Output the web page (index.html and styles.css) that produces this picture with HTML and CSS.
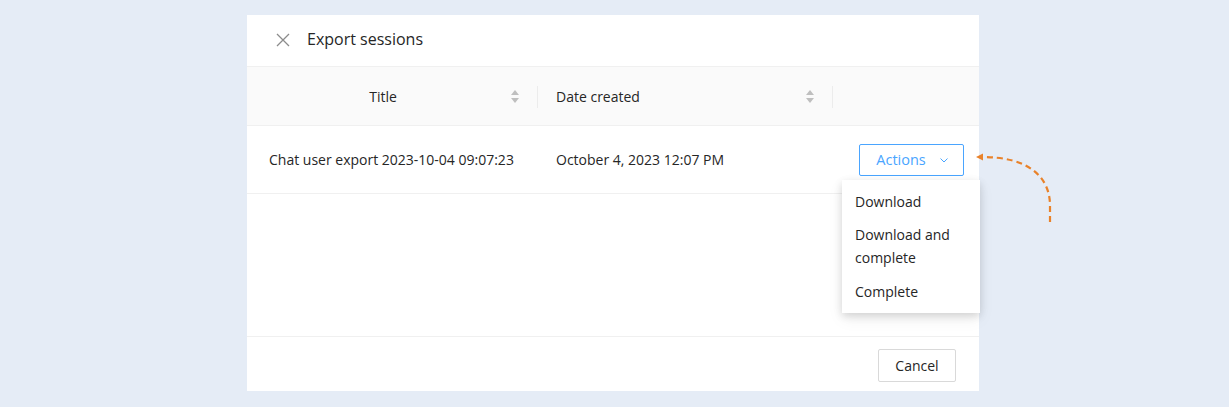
FILE: index.html
```html
<!DOCTYPE html>
<html lang="en">
<head>
  <meta charset="UTF-8">
  <title>Export sessions</title>
  <link rel="stylesheet" href="styles.css">
</head>
<body>
  <div class="modal">
    <div class="modal-header">
      <span class="close">
        <svg width="14" height="14" viewBox="0 0 14 14"><path d="M1 1L13 13M13 1L1 13" stroke="#8c8c8c" stroke-width="1.3" fill="none"/></svg>
      </span>
      <span class="modal-title">Export sessions</span>
    </div>

    <div class="table">
      <div class="thead">
        <div class="th th-title">
          <span class="th-label">Title</span>
          <span class="sorter"></span>
        </div>
        <div class="th th-date">
          <span class="th-label">Date created</span>
          <span class="sorter"></span>
        </div>
        <div class="th th-actions"></div>
      </div>
      <div class="tr">
        <div class="td td-title">Chat user export 2023-10-04 09:07:23</div>
        <div class="td td-date">October 4, 2023 12:07 PM</div>
        <div class="td td-actions">
          <div class="actions">
            <button class="btn-actions">Actions
              <svg width="10" height="10" viewBox="0 0 10 10"><path d="M1.5 3.5L5 7L8.5 3.5" stroke="#4aa5ff" stroke-width="1" fill="none"/></svg>
            </button>
            <ul class="menu">
              <li>Download</li>
              <li>Download and complete</li>
              <li>Complete</li>
            </ul>
          </div>
        </div>
      </div>
    </div>

    <div class="modal-footer">
      <button class="btn-cancel">Cancel</button>
    </div>
  </div>

  <!-- arrow pointing at the actions button -->
  <svg class="hint" width="90" height="90" viewBox="0 0 90 90">
    <path d="M80 78 L80 60 C79 32 58 13 12 13" stroke="#e9822a" stroke-width="2.2" stroke-dasharray="6 4" fill="none"/>
    <path d="M6 13 L13 9.5 L13 16.5 Z" fill="#e9822a"/>
  </svg>
</body>
</html>
```
FILE: styles.css
```css
body {
  margin: 0;
  background-color: #e5ecf6;
  font-family: "Open Sans", "Noto Sans", sans-serif;
  font-size: 14px;
  color: #262626;
  height: 407px;
  overflow: hidden;
  position: relative;
}

.modal {
  margin: 15px 0 0 247px;
  width: 732px;
  height: 376px;
  background-color: #fff;
  display: flex;
  flex-direction: column;
}

.modal-header {
  height: 51px;
  border-bottom: 1px solid #f0f0f0;
  display: flex;
  align-items: center;
  padding: 0 0 0 29px;
}

.close {
  display: flex;
  margin-right: 17px;
  margin-top: -2px;
}

.modal-title {
  font-size: 16px;
  color: #262626;
  margin-top: -4px;
}

.table {
  flex: 1;
}

.thead {
  display: flex;
  height: 57px;
  padding-top: 1px;
  background-color: #fafafa;
  border-bottom: 1px solid #f0f0f0;
}

.th {
  position: relative;
  display: flex;
  align-items: center;
  color: #262626;
}

.th::after {
  content: "";
  position: absolute;
  right: 0;
  top: 50%;
  width: 1px;
  height: 22px;
  margin-top: -11px;
  background-color: #ececec;
}

.th-title {
  width: 291px;
  padding-right: 19px;
  box-sizing: border-box;
}

.th-title .th-label {
  flex: 1;
  text-align: center;
  padding-left: 8px;
}

.th-date {
  width: 295px;
  padding: 0 19px 0 18px;
  box-sizing: border-box;
}

.th-date .th-label {
  flex: 1;
}

.th-actions {
  flex: 1;
}

.th-actions::after {
  display: none;
}

.sorter {
  width: 8px;
  height: 13px;
  position: relative;
}

.sorter::before,
.sorter::after {
  content: "";
  position: absolute;
  left: 0;
  border-left: 4px solid transparent;
  border-right: 4px solid transparent;
}

.sorter::before {
  top: 0;
  border-bottom: 5px solid #bfbfbf;
}

.sorter::after {
  bottom: 0;
  border-top: 5px solid #bfbfbf;
}

.tr {
  display: flex;
  height: 67px;
  border-bottom: 1px solid #f0f0f0;
}

.td {
  display: flex;
  align-items: center;
}

.td-title {
  width: 291px;
  padding-left: 22px;
  box-sizing: border-box;
}

.td-date {
  width: 295px;
  padding-left: 18px;
  box-sizing: border-box;
}

.td-actions {
  flex: 1;
  justify-content: flex-end;
  padding-right: 15px;
}

.actions {
  position: relative;
}

.btn-actions {
  height: 32px;
  width: 105px;
  border: 1px solid #4aa5ff;
  border-radius: 2px;
  background: #fff;
  color: #4aa5ff;
  font-family: inherit;
  font-size: 14.5px;
  padding: 0 0 0 2px;
  display: flex;
  align-items: center;
  justify-content: center;
  gap: 13px;
}

.btn-actions svg {
  margin-top: 1px;
}

.menu {
  position: absolute;
  top: 36px;
  right: -16px;
  width: 138px;
  margin: 0;
  padding: 5px 0 5px;
  list-style: none;
  background: #fff;
  box-shadow: 0 3px 8px rgba(0, 0, 0, 0.14), 0 6px 16px rgba(0, 0, 0, 0.06);
  z-index: 2;
}

.menu li {
  padding: 5px 13px 5px 13px;
  line-height: 23px;
  color: #262626;
}

.menu li:last-child {
  padding-top: 6px;
}

.modal-footer {
  height: 54px;
  border-top: 1px solid #f0f0f0;
  display: flex;
  align-items: center;
  justify-content: flex-end;
  padding-right: 23px;
}

.btn-cancel {
  height: 33px;
  width: 78px;
  margin-top: 2px;
  border: 1px solid #d9d9d9;
  border-radius: 2px;
  background: #fff;
  color: #262626;
  font-family: inherit;
  font-size: 14px;
}

.hint {
  position: absolute;
  left: 970px;
  top: 144px;
}
```
